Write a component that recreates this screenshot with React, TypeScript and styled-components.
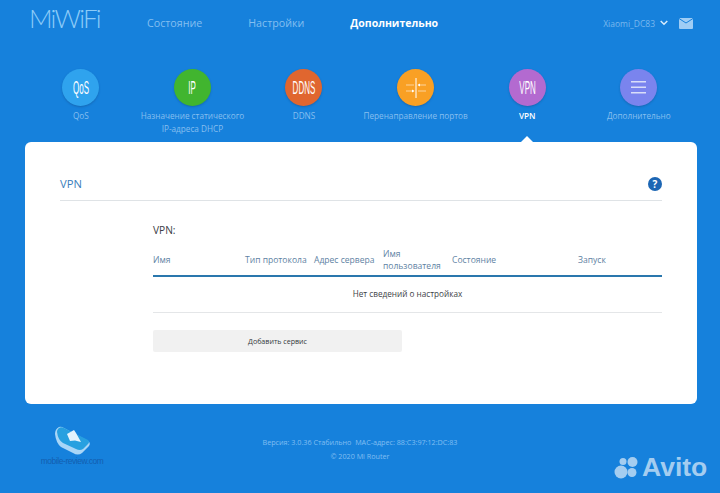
import React from 'react';
import styled, { createGlobalStyle } from 'styled-components';

const GlobalStyle = createGlobalStyle`
  html, body {
    margin: 0;
    padding: 0;
    background: #1681dc;
  }
  body {
    font-family: "Open Sans", "Noto Sans", "Liberation Sans", sans-serif;
  }
`;

const Page = styled.div`
  position: relative;
  width: 720px;
  height: 493px;
  overflow: hidden;
  background: #1681dc;
  display: flex;
  flex-direction: column;
`;

const Header = styled.header`
  display: flex;
  align-items: center;
  height: 46px;
  padding: 0 27px 0 29px;
`;

const Logo = styled.div`
  width: 118px;
  font-family: "Lato", sans-serif;
  font-weight: 300;
  font-size: 26px;
  line-height: 36px;
  letter-spacing: -1.8px;
  color: #8ccbf8;
  margin-top: -11px;
`;

const MainNav = styled.nav`
  display: flex;
  gap: 46px;
  flex: 1;
`;

const NavLink = styled.a<{ $active?: boolean }>`
  font-size: ${p => (p.$active ? '10.5px' : '10.7px')};
  font-weight: ${p => (p.$active ? 700 : 400)};
  color: ${p => (p.$active ? '#ffffff' : '#84bff0')};
`;

const UserBox = styled.div`
  display: flex;
  align-items: center;
  font-size: 8.5px;
  color: #79b8ee;
`;

const Chevron = styled.svg`
  margin: 0 11px 0 5px;
`;

const Tabs = styled.div`
  display: grid;
  grid-template-columns: repeat(6, 111.6px);
  margin-left: 25px;
  height: 96px;
  padding-top: 23px;
  box-sizing: border-box;
`;

const Tab = styled.div`
  position: relative;
  display: flex;
  flex-direction: column;
  align-items: center;
  text-align: center;
`;

const Circle = styled.div<{ $bg: string }>`
  width: 37px;
  height: 37px;
  border-radius: 50%;
  background: ${p => p.$bg};
  box-shadow: 0 1px 2px rgba(20, 60, 110, 0.35);
  color: #fff;
  display: flex;
  align-items: center;
  justify-content: center;
  font-family: "Liberation Sans", sans-serif;
  font-size: 19px;
`;

const Narrow = styled.span`
  display: inline-block;
  transform: scaleX(0.42);
  white-space: nowrap;
`;

const TabLabel = styled.div<{ $active?: boolean }>`
  margin-top: 4px;
  font-size: 8.2px;
  line-height: 12.5px;
  white-space: nowrap;
  font-weight: ${p => (p.$active ? 600 : 400)};
  color: ${p => (p.$active ? '#ffffff' : '#86bfef')};
`;

const Caret = styled.div`
  position: absolute;
  left: 50%;
  top: 66.5px;
  margin-left: -7px;
  border-left: 7px solid transparent;
  border-right: 7px solid transparent;
  border-bottom: 7px solid #fff;
`;

const Card = styled.main`
  width: 672px;
  height: 262px;
  margin-left: 25px;
  background: #fff;
  border-radius: 6px;
  box-sizing: border-box;
  padding: 0 35px;
`;

const CardHead = styled.div`
  display: flex;
  align-items: flex-end;
  justify-content: space-between;
  height: 59px;
  padding-bottom: 9px;
  box-sizing: border-box;
  border-bottom: 1px solid #dfe3e6;
  color: #3a7ebb;
  font-size: 11.2px;
  line-height: 15px;
`;

const Help = styled.div`
  width: 14px;
  height: 14px;
  border-radius: 50%;
  background: #1c66b4;
  color: #fff;
  font-size: 10px;
  font-weight: 700;
  line-height: 14px;
  text-align: center;
`;

const Section = styled.section`
  margin-left: 93px;
`;

const SectionTitle = styled.div`
  margin-top: 21px;
  font-size: 10.2px;
  line-height: 16px;
  color: #3b4046;
`;

const HeadRow = styled.div`
  display: grid;
  grid-template-columns: 92px 69px 69px 69px 126px 84px;
  align-items: center;
  height: 31px;
  margin-top: 6px;
  border-bottom: 2px solid #2a77ad;
  font-size: 8.55px;
  line-height: 12px;
  color: #5e82a3;
`;

const EmptyRow = styled.div`
  height: 36px;
  padding-bottom: 2px;
  box-sizing: border-box;
  display: flex;
  align-items: center;
  justify-content: center;
  border-bottom: 1px solid #e4e6e8;
  font-size: 8.2px;
  color: #3e4246;
`;

const AddButton = styled.button`
  display: block;
  width: 249px;
  height: 22px;
  margin-top: 17px;
  padding: 0;
  border: 0;
  border-radius: 2px;
  background: #f1f1f1;
  color: #33383c;
  font-family: inherit;
  font-size: 7.1px;
`;

const Footer = styled.footer`
  margin-top: 31px;
  text-align: center;
  font-size: 7.2px;
  line-height: 14px;
  color: #80bef2;
`;

const Watermark = styled.div`
  position: absolute;
  left: 41px;
  top: 426px;
  width: 62px;
  display: flex;
  flex-direction: column;
  align-items: center;
  font-family: "Liberation Sans", sans-serif;
  font-size: 8.4px;
  letter-spacing: -0.4px;
  line-height: 10px;
  white-space: nowrap;
  color: #135fb0;
`;

const AvitoMark = styled.div`
  position: absolute;
  left: 614px;
  top: 453px;
  display: flex;
  align-items: center;
  gap: 2px;
  font-family: "Liberation Sans", sans-serif;
  font-size: 26.5px;
  line-height: 28px;
  font-weight: 700;
  color: #a4cdf0;
`;

const tabs = [
  { id: 'qos', glyph: 'QoS', bg: '#2fa3ee', label: ['QoS'] },
  { id: 'ip', glyph: 'IP', bg: '#41b52f', label: ['Назначение статического', 'IP-адреса DHCP'] },
  { id: 'ddns', glyph: 'DDNS', bg: '#e0662f', label: ['DDNS'] },
  { id: 'ports', bg: '#f9a024', label: ['Перенаправление портов'] },
  { id: 'vpn', glyph: 'VPN', bg: '#b36ad0', label: ['VPN'], active: true },
  { id: 'more', bg: '#7a84ee', label: ['Дополнительно'] },
];

const PortsIcon = () => (
  <svg width="24" height="24" viewBox="0 0 24 24" fill="none" stroke="#fff" strokeWidth="0.8">
    <path d="M12 2v20" strokeWidth="1" />
    <path d="M2 9h8M14 9h8M2 15h8M14 15h8" opacity="0.7" />
    <path d="M16 7.500l-2.500 1.500 2.500 1.500z" fill="#fff" stroke="none" />
    <path d="M8 13.500l2.500 1.500-2.500 1.500z" fill="#fff" stroke="none" />
  </svg>
);

const MenuIcon = () => (
  <svg width="16" height="13" viewBox="0 0 16 13" fill="#d9def9">
    <rect x="0" y="0" width="15" height="1.500" />
    <rect x="0" y="5.500" width="15" height="1.500" />
    <rect x="0" y="11" width="15" height="1.500" />
  </svg>
);

const App = () => {
  return (
    <Page>
      <GlobalStyle />
      <Header>
        <Logo>MiWiFi</Logo>
        <MainNav>
          <NavLink>Состояние</NavLink>
          <NavLink>Настройки</NavLink>
          <NavLink $active>Дополнительно</NavLink>
        </MainNav>
        <UserBox>
          Xiaomi_DC83
          <Chevron width="8" height="6" viewBox="0 0 8 6" fill="none" stroke="#d8ecfc" strokeWidth="1.500">
            <path d="M.7 1l3.300 3.300L7.300 1" />
          </Chevron>
          <svg width="14" height="11" viewBox="0 0 14 11">
            <rect width="14" height="11" rx="1" fill="#9fcdf5" />
            <path d="M0 .5l7 4.500 7-4.500" fill="none" stroke="#1681dc" strokeWidth="1" />
          </svg>
        </UserBox>
      </Header>

      <Tabs>
        {tabs.map(t => (
          <Tab key={t.id}>
            <Circle $bg={t.bg}>
              {t.glyph && <Narrow>{t.glyph}</Narrow>}
              {t.id === 'ports' && <PortsIcon />}
              {t.id === 'more' && <MenuIcon />}
            </Circle>
            <TabLabel $active={t.active}>
              {t.label.map(line => (
                <div key={line}>{line}</div>
              ))}
            </TabLabel>
            {t.active && <Caret />}
          </Tab>
        ))}
      </Tabs>

      <Card>
        <CardHead>
          VPN
          <Help>?</Help>
        </CardHead>
        <Section>
          <SectionTitle>VPN:</SectionTitle>
          <HeadRow>
            <div>Имя</div>
            <div>Тип протокола</div>
            <div>Адрес сервера</div>
            <div>
              Имя
              <br />
              пользователя
            </div>
            <div>Состояние</div>
            <div>Запуск</div>
          </HeadRow>
          <EmptyRow>Нет сведений о настройках</EmptyRow>
          <AddButton>Добавить сервис</AddButton>
        </Section>
      </Card>

      <Footer>
        <div>Версия: 3.0.36 Стабильно&nbsp;&nbsp;MAC-адрес: 88:C3:97:12:DC:83</div>
        <div>© 2020 Mi Router</div>
      </Footer>

      <Watermark>
        <svg width="37" height="30" viewBox="0 0 37 30">
          <path d="M1 8 Q1 3 5 1 Q7 0 10 2 L34 15 Q37 17 35 20 L28 27 Q24 30 19 27 L7 21 Q2 17 1 8 Z" fill="#a9d6f7" />
          <path d="M3 6 Q3 3 6 1.500 Q8 1 10 2 L34 14 Q36 16 34 18 L29 23 Q26 25 22 23 L9 17 Q4 14 3 6 Z" fill="#27a0e0" />
          <path d="M13 8 L20 4 L22 7 L27 16 L21 14.500 L16 15 Z" fill="#e4f3fd" />
        </svg>
        <span>mobile-review.com</span>
      </Watermark>

      <AvitoMark>
        <svg width="26" height="26" viewBox="0 0 26 26" fill="#a4cdf0">
          <circle cx="7" cy="18" r="6.500" />
          <circle cx="18" cy="18.500" r="4.500" />
          <circle cx="9" cy="7.500" r="3.500" />
          <circle cx="18.500" cy="8" r="5" />
        </svg>
        Avito
      </AvitoMark>
    </Page>
  );
};

export default App;
